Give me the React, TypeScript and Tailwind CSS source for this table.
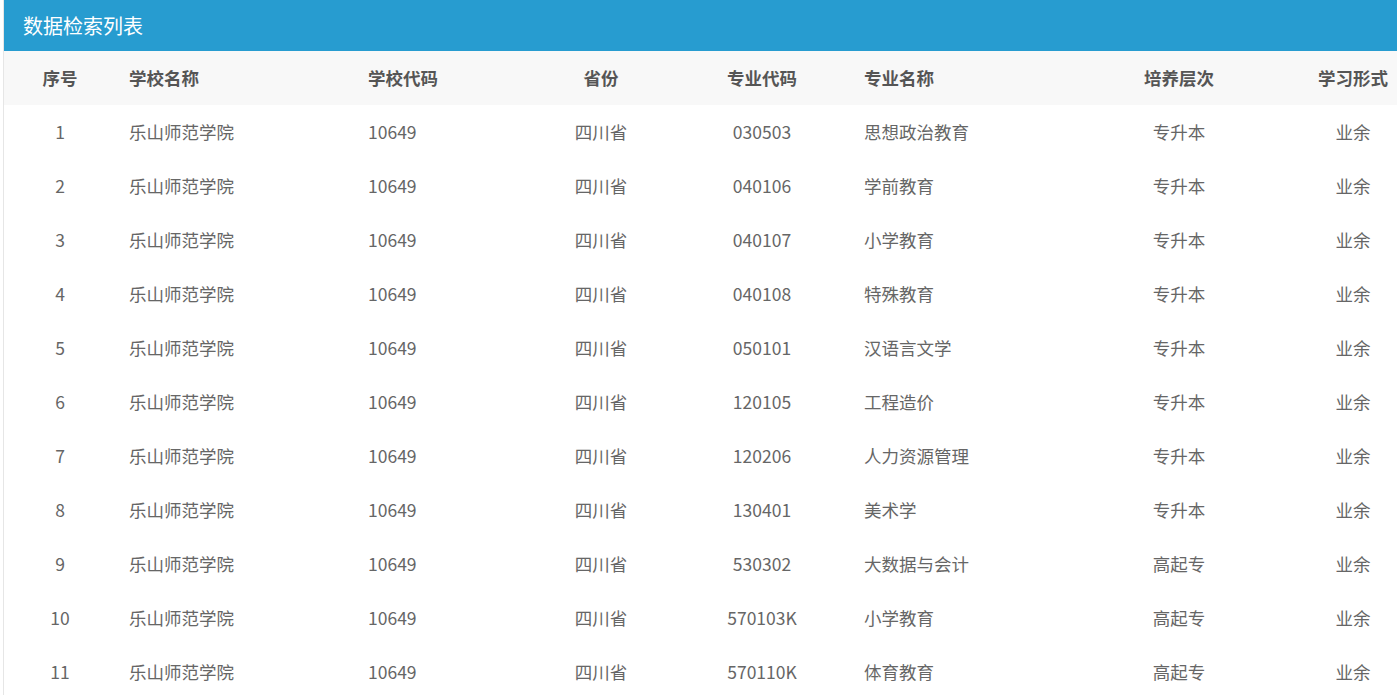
import React from "react";

const rows = [
	["1", "乐山师范学院", "10649", "四川省", "030503", "思想政治教育", "专升本", "业余"],
	["2", "乐山师范学院", "10649", "四川省", "040106", "学前教育", "专升本", "业余"],
	["3", "乐山师范学院", "10649", "四川省", "040107", "小学教育", "专升本", "业余"],
	["4", "乐山师范学院", "10649", "四川省", "040108", "特殊教育", "专升本", "业余"],
	["5", "乐山师范学院", "10649", "四川省", "050101", "汉语言文学", "专升本", "业余"],
	["6", "乐山师范学院", "10649", "四川省", "120105", "工程造价", "专升本", "业余"],
	["7", "乐山师范学院", "10649", "四川省", "120206", "人力资源管理", "专升本", "业余"],
	["8", "乐山师范学院", "10649", "四川省", "130401", "美术学", "专升本", "业余"],
	["9", "乐山师范学院", "10649", "四川省", "530302", "大数据与会计", "高起专", "业余"],
	["10", "乐山师范学院", "10649", "四川省", "570103K", "小学教育", "高起专", "业余"],
	["11", "乐山师范学院", "10649", "四川省", "570110K", "体育教育", "高起专", "业余"],
];

const heads = ["序号", "学校名称", "学校代码", "省份", "专业代码", "专业名称", "培养层次", "学习形式"];

// left-aligned columns: 学校名称, 学校代码, 专业名称
const align = ["text-center", "pl-[13px]", "pl-[13px]", "text-center", "text-center", "pl-[13px]", "text-center", "text-center"];

const grid = "grid grid-cols-[112px_239px_174px_144px_178px_198px_260px_88px]";

const App = () => {
	return (
		<div
			className="min-h-[695px] bg-white pl-[3px]"
			style={{ fontFamily: '"Noto Sans CJK SC", "Noto Sans", sans-serif' }}
		>
			<div className="min-h-[695px] border-l border-[#e6e6e6]">
				<div className="h-[51px] bg-[#279cd0] flex items-center px-[19px]">
					<h2 className="text-[20px] text-white">数据检索列表</h2>
				</div>
				<div className={`${grid} h-[54px] items-center bg-[#f8f8f8]`}>
					{heads.map((h, i) => (
						<div key={h} className={`${align[i]} text-[17.5px] font-bold text-[#555]`}>
							{h}
						</div>
					))}
				</div>
				{rows.map((r) => (
					<div key={r[0]} className={`${grid} h-[54px] items-center`}>
						{r.map((c, i) => (
							<div key={i} className={`${align[i]} text-[17.5px] text-[#666]`}>
								{c}
							</div>
						))}
					</div>
				))}
			</div>
		</div>
	);
};

export default App;
